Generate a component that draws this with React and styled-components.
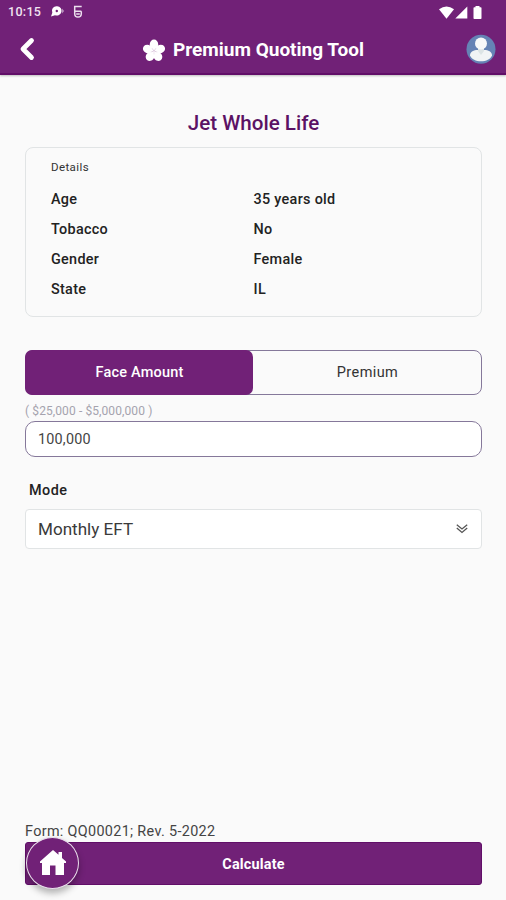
import React from 'react';
import styled, { createGlobalStyle } from 'styled-components';

const details = [
  ['Age', '35 years old'],
  ['Tobacco', 'No'],
  ['Gender', 'Female'],
  ['State', 'IL'],
];

function App() {
  return (
    <Page>
      <GlobalStyle />
      <Header>
        <StatusBar>
          <Clock>10:15</Clock>
          <StatusIcon width="15" height="14" viewBox="0 0 15 14">
            <path d="M7.2 1.2a4.7 4.7 0 1 1-2.2 9L1 11.4l1.3-3.6A4.7 4.7 0 0 1 7.2 1.2z" fill="#fff" />
            <circle cx="6.8" cy="6" r="1.2" fill="#712177" />
            <path d="M12 3.5l2.2 2.5-2.2 2.5z" fill="#b78fbb" />
          </StatusIcon>
          <StatusIcon $left={8} width="10" height="14" viewBox="0 0 10 14">
            <path d="M8.7 1.6H1.7v4.7h6.6M1.7 6.3v2.5a3.3 3.3 0 0 0 6.6 0V6.3M3.2 9h3.6" fill="none" stroke="#ecdfee" strokeWidth="1.5" />
          </StatusIcon>
          <Spacer />
          <StatusIcon width="15" height="13" viewBox="0 0 15 13">
            <path d="M0 3.2Q7.5-2.2 15 3.2L7.5 12.8z" fill="#fff" />
          </StatusIcon>
          <StatusIcon $left={1} width="13" height="13" viewBox="0 0 13 13">
            <path d="M12.3.5v12H.3z" fill="#fff" />
          </StatusIcon>
          <StatusIcon $left={5} width="9" height="13" viewBox="0 0 9 13">
            <path d="M2.5 1.2V0h4v1.2h1.2q.8 0 .8.8v10.2q0 .8-.8.8H1.3q-.8 0-.8-.8V2q0-.8.8-.8z" fill="#fff" />
          </StatusIcon>
        </StatusBar>
        <NavBar>
          <BackButton aria-label="Back">
            <svg width="16" height="24" viewBox="0 0 16 24">
              <path d="M12.5 3.5L4 12l8.5 8.5" fill="none" stroke="#fff" strokeWidth="4.8" strokeLinecap="round" strokeLinejoin="round" />
            </svg>
          </BackButton>
          <Brand>
            <Flower />
            Premium Quoting Tool
          </Brand>
          <Avatar />
        </NavBar>
      </Header>
      <Content>
        <ProductName>Jet Whole Life</ProductName>
        <DetailsCard>
          <DetailsTitle>Details</DetailsTitle>
          {details.map(([label, value]) => (
            <DetailRow key={label}>
              <span>{label}</span>
              <span>{value}</span>
            </DetailRow>
          ))}
        </DetailsCard>
        <Toggle>
          <ToggleOption $active>Face Amount</ToggleOption>
          <ToggleOption>Premium</ToggleOption>
        </Toggle>
        <Range>( $25,000 - $5,000,000 )</Range>
        <AmountInput defaultValue="100,000" />
        <ModeLabel>Mode</ModeLabel>
        <Select>
          Monthly EFT
          <svg width="12" height="10" viewBox="0 0 12 10">
            <path d="M.8.8L6 4.9 11.2.8M.8 4L6 8.400 11.2 4" fill="none" stroke="#555" strokeWidth="1.3" />
          </svg>
        </Select>
      </Content>
      <Footer>
        <FormText>Form: QQ00021; Rev. 5-2022</FormText>
        <CalculateButton>Calculate</CalculateButton>
        <HomeButton aria-label="Home">
          <svg width="28" height="27" viewBox="0 0 28 27">
            <path d="M14 1L1 12.5V14h2v12h8v-9.500h5.5V26H25V14h2v-1.500L23 9V3h-3.500v2.800z" fill="#fff" />
          </svg>
        </HomeButton>
      </Footer>
    </Page>
  );
}

function Flower() {
  return (
    <svg width="24" height="23" viewBox="-12 -12 24 23">
      {[0, 72, 144, 216, 288].map((angle) => (
        <g key={angle} transform={`rotate(${angle})`}>
          <ellipse cx="0" cy="-6.7" rx="4.2" ry="4.7" fill="#fff" />
          <path d="M0 0L-4-5.200H4z" fill="#fff" />
        </g>
      ))}
      {[36, 108, 180, 252, 324].map((angle) => (
        <path key={angle} d="M0-1V-3.500" transform={`rotate(${angle})`} stroke="#e0cfe2" strokeWidth=".5" />
      ))}
    </svg>
  );
}

function Avatar() {
  return (
    <svg width="30" height="30" viewBox="0 0 30 30">
      <circle cx="15" cy="15.3" r="14.500" fill="#6583b5" />
      <path d="M4 21.500c0-4 4-5.500 7.500-5.500h7c3.500 0 7.500 1.500 7.500 5.500-1.500 3.700-6 5.800-11 5.800S5.500 25.200 4 21.500z" fill="#f1f4f5" />
      <path d="M12 14h6v3l-3 4-3-4z" fill="#dce4e5" />
      <circle cx="15" cy="9.500" r="6" fill="#f7f8f9" />
    </svg>
  );
}

export default App;

const GlobalStyle = createGlobalStyle`
  * {
    box-sizing: border-box;
  }

  body {
    margin: 0;
    background: #fafafa;
    font-family: Roboto, "Liberation Sans", sans-serif;
  }

  button, input {
    font-family: inherit;
  }
`

const Page = styled.div`
  display: flex;
  flex-direction: column;
  height: 900px;
  background: #fafafa;
`

const Header = styled.header`
  height: 75px;
  background: #712177;
  border-bottom: 2px solid #610e68;
  box-shadow: 0 1px 2px rgba(0, 0, 0, 0.25);
  color: #fff;
`

const StatusBar = styled.div`
  display: flex;
  align-items: center;
  height: 24px;
  padding: 0 24px 0 8px;
`

const Clock = styled.span`
  margin-right: 9px;
  font-size: 12.5px;
  font-weight: 500;
  line-height: 24px;
  letter-spacing: 0.3px;
  color: #f0e4f1;
`

const StatusIcon = styled.svg`
  flex: none;
  margin-left: ${({ $left }) => $left || 0}px;
`

const Spacer = styled.div`
  flex: 1;
`

const NavBar = styled.div`
  display: flex;
  align-items: center;
  justify-content: space-between;
  height: 50px;
  padding: 0 10px 0 19px;
`

const BackButton = styled.button`
  display: flex;
  width: 21px;
  padding: 0;
  border: none;
  background: none;
`

const Brand = styled.h1`
  display: flex;
  align-items: center;
  gap: 7px;
  margin: 0;
  padding-top: 2px;
  font-size: 19px;
  font-weight: 700;
  line-height: 24px;
`

const Content = styled.main`
  flex: 1;
  padding: 33px 24px 0 25px;
`

const ProductName = styled.h2`
  margin: 0 0 9px;
  font-size: 20.6px;
  font-weight: 500;
  line-height: 30px;
  text-align: center;
  color: #5b1264;
`

const DetailsCard = styled.section`
  height: 170px;
  padding: 9px 25px 0;
  border: 1.5px solid #e1e4e5;
  border-radius: 8px;
`

const DetailsTitle = styled.div`
  margin-bottom: 8px;
  font-size: 11.5px;
  line-height: 20px;
  letter-spacing: 0.4px;
  color: #333;
`

const DetailRow = styled.div`
  display: grid;
  grid-template-columns: 1fr 1fr;
  font-size: 14.4px;
  font-weight: 500;
  line-height: 30px;
  letter-spacing: 0.3px;
  color: #222;
`

const Toggle = styled.div`
  display: flex;
  height: 45px;
  margin-top: 33px;
  border: 1px solid #85789a;
  border-radius: 8px;
`

const ToggleOption = styled.button`
  flex: 1;
  margin: ${({ $active }) => ($active ? '-1px 0 -1px -1px' : '0')};
  padding: 0 0 0 1px;
  border: none;
  border-radius: 7px;
  background: ${({ $active }) => ($active ? '#712177' : 'none')};
  color: ${({ $active }) => ($active ? '#fff' : '#333')};
  font-size: 14.5px;
  font-weight: ${({ $active }) => ($active ? 500 : 400)};
  letter-spacing: ${({ $active }) => ($active ? '0.2px' : '0.4px')};
`

const Range = styled.div`
  margin-top: 7px;
  font-size: 12px;
  line-height: 19px;
  letter-spacing: 0.1px;
  color: #a5a3ae;
`

const AmountInput = styled.input`
  display: block;
  width: 100%;
  height: 36px;
  padding: 0 12px;
  border: 1px solid #85789a;
  border-radius: 10px;
  background: #fff;
  font-size: 14.4px;
  letter-spacing: 0.2px;
  color: #444;
`

const ModeLabel = styled.div`
  margin: 24px 0 8px 4px;
  font-size: 14.4px;
  font-weight: 500;
  line-height: 20px;
  letter-spacing: 0.5px;
  color: #222;
`

const Select = styled.div`
  display: flex;
  align-items: center;
  justify-content: space-between;
  height: 40px;
  padding: 0 13px 1px 12px;
  border: 1px solid #e1e4e5;
  border-radius: 4px;
  background: #fff;
  font-size: 17.1px;
  color: #3a3a3a;
`

const Footer = styled.footer`
  position: relative;
  padding: 0 24px 15px 25px;
`

const FormText = styled.div`
  padding-top: 2px;
  font-size: 14.4px;
  line-height: 20px;
  letter-spacing: 0.33px;
  color: #444;
`

const CalculateButton = styled.button`
  display: block;
  width: 100%;
  height: 43px;
  padding: 2px 0 0;
  border: 1px solid #610e68;
  border-radius: 3px;
  background: #712177;
  font-size: 14.4px;
  font-weight: 700;
  letter-spacing: 0.2px;
  color: #fff;
`

// floats over the left end of the calculate button
const HomeButton = styled.button`
  position: absolute;
  left: 26px;
  bottom: 11px;
  display: flex;
  align-items: center;
  justify-content: center;
  width: 53px;
  height: 52px;
  padding: 0 0 2px;
  border: 1.5px solid #eadfec;
  border-radius: 50%;
  background: #712177;
  box-shadow: 0 4px 7px rgba(0, 0, 0, 0.3);
`
